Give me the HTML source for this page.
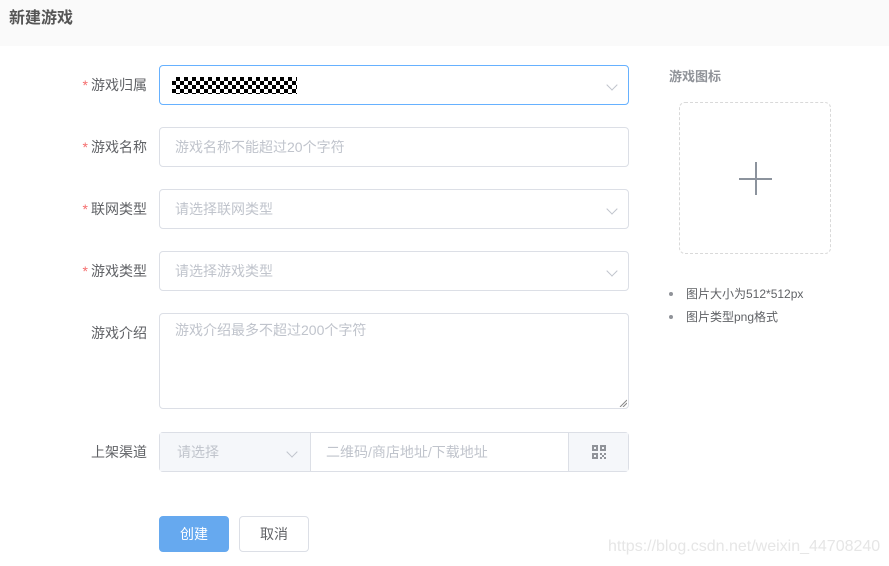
<!DOCTYPE html>
<html><head><meta charset="utf-8"><style>
*{box-sizing:border-box;margin:0;padding:0}
body{width:889px;height:566px;background:#fff;position:relative;overflow:hidden;font-family:"Liberation Sans","Noto Sans CJK SC",sans-serif;color:#606266}
.hd{position:absolute;left:0;top:0;width:889px;height:46px;background:#fafafa}
.hd span{position:absolute;left:9px;top:8px;font-size:16px;font-weight:bold;color:#555;line-height:22px}
.lb{position:absolute;right:742px;font-size:14px;line-height:20px;color:#606266;white-space:nowrap}
.lb i{font-style:normal;color:#f56c6c;margin-right:3px}
.in{position:absolute;left:159px;width:470px;height:40px;border:1px solid #dcdfe6;border-radius:4px;font-size:14px;color:#c0c4cc;padding:0 15px;line-height:38px}
.ar{position:absolute;right:12px;top:15px;width:8px;height:8px;border-right:1px solid #c0c4cc;border-bottom:1px solid #c0c4cc;transform:rotate(45deg)}
.btn{position:absolute;top:516px;height:36px;width:70px;border-radius:4px;font-size:14px;text-align:center;line-height:34px}
</style></head><body>
<div class="hd"><span>新建游戏</span></div>

<div class="lb" style="top:75px"><i>*</i>游戏归属</div>
<div class="in" style="top:65px;border-color:#66b1ff">
<div style="position:absolute;left:12px;top:11px;width:125px;height:17px;background:repeating-conic-gradient(#000 0 25%,#fff 0 50%) 0 0/8px 8px"></div>
<div class="ar"></div></div>

<div class="lb" style="top:137px"><i>*</i>游戏名称</div>
<div class="in" style="top:127px">游戏名称不能超过20个字符</div>

<div class="lb" style="top:199px"><i>*</i>联网类型</div>
<div class="in" style="top:189px">请选择联网类型<div class="ar"></div></div>

<div class="lb" style="top:261px"><i>*</i>游戏类型</div>
<div class="in" style="top:251px">请选择游戏类型<div class="ar"></div></div>

<div class="lb" style="top:323px">游戏介绍</div>
<div class="in" style="top:313px;height:96px;line-height:20px;padding-top:6px">游戏介绍最多不超过200个字符
<svg style="position:absolute;right:1px;bottom:1px" width="8" height="8" viewBox="0 0 8 8" stroke="#888" stroke-width="1"><path d="M1 8L8 1M4 8L8 4"/></svg></div>

<div class="lb" style="top:442px">上架渠道</div>
<div class="in" style="top:432px;padding:0">
<div style="position:absolute;left:0;top:0;width:151px;height:38px;background:#f5f7fa;border-right:1px solid #dcdfe6;padding-left:17px">请选择<div class="ar" style="right:14px"></div></div>
<div style="position:absolute;left:166px;top:0">二维码/商店地址/下载地址</div>
<div style="position:absolute;right:0;top:0;width:60px;height:38px;background:#f5f7fa;border-left:1px solid #dcdfe6">
<svg style="position:absolute;left:23px;top:12px" width="14" height="14" viewBox="0 0 14 14" fill="#909399"><path d="M0 0h6v6H0zM2 2v2h2V2zM8 0h6v6H8zM10 2v2h2V2zM0 8h6v6H0zM2 10v2h2v-2zM8 8h2v2H8zM12 8h2v2h-2zM10 10h2v2h-2zM8 12h2v2H8zM12 12h2v2h-2z" fill-rule="evenodd"/></svg></div>
</div>

<div class="btn" style="left:159px;background:#66a9ef;color:#fff;border:1px solid #66a9ef">创建</div>
<div class="btn" style="left:239px;border:1px solid #dcdfe6;color:#606266">取消</div>

<div style="position:absolute;left:669px;top:66px;font-size:13px;font-weight:bold;color:#909399">游戏图标</div>
<div style="position:absolute;left:679px;top:102px;width:152px;height:152px;border:1px dashed #d9d9d9;border-radius:6px">
<div style="position:absolute;left:59px;top:75px;width:33px;height:2px;background:#8c939d"></div>
<div style="position:absolute;left:75px;top:59px;width:2px;height:33px;background:#8c939d"></div>
</div>
<div style="position:absolute;left:669px;top:283px;font-size:12px;line-height:23px;color:#606266">
<div><span style="display:inline-block;width:4px;height:4px;border-radius:2px;background:#909399;margin:0 13px 2px 0"></span>图片大小为512*512px</div>
<div><span style="display:inline-block;width:4px;height:4px;border-radius:2px;background:#909399;margin:0 13px 2px 0"></span>图片类型png格式</div>
</div>
<div style="position:absolute;left:608px;top:538px;font-size:16px;color:#e6e6e6">https://blog.csdn.net/weixin_44708240</div>
</body></html>
